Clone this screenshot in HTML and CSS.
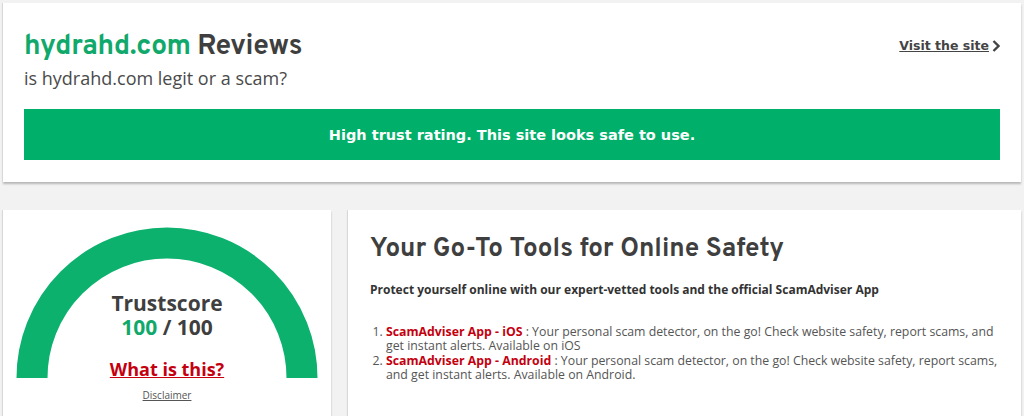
FILE: index.html
```html
<!DOCTYPE html>
<html lang="en">
<head>
<meta charset="utf-8">
<title>hydrahd.com Reviews</title>
<link rel="stylesheet" href="styles.css">
</head>
<body>
<div class="page">
  <section class="card hero">
    <div class="hero-top">
      <div class="hero-titles">
        <h1 class="hero-title"><span class="domain">hydrahd.com</span> Reviews</h1>
        <p class="hero-sub">is hydrahd.com legit or a scam?</p>
      </div>
      <a class="visit" href="#">Visit the site <svg class="chev" viewBox="0 0 8 12" width="8" height="12"><path d="M1.5 1 L6.5 6 L1.5 11" fill="none" stroke="currentColor" stroke-width="2.4"/></svg></a>
    </div>
    <div class="verdict">High trust rating. This site looks safe to use.</div>
  </section>

  <div class="row">
    <section class="card score">
      <div class="gauge">
        <svg class="gauge-arc" viewBox="0 0 302 153" width="302" height="153">
          <path d="M16 151 A135 135 0 0 1 286 151" fill="none" stroke="#0db16e" stroke-width="31"/>
        </svg>
        <div class="gauge-text">
          <div class="ts-label">Trustscore</div>
          <div class="ts-value"><span class="ts-num">100</span> / 100</div>
          <a class="whatis" href="#">What is this?</a>
        </div>
      </div>
      <a class="disclaimer" href="#">Disclaimer</a>
    </section>

    <section class="card tools">
      <h2 class="tools-title">Your Go-To Tools for Online Safety</h2>
      <p class="tools-lead">Protect yourself online with our expert-vetted tools and the official ScamAdviser App</p>
      <ol class="tools-list">
        <li><a href="#">ScamAdviser App - iOS</a> : Your personal scam detector, on the go! Check website safety, report scams, and get instant alerts. Available on iOS</li>
        <li><a href="#">ScamAdviser App - Android</a> : Your personal scam detector, on the go! Check website safety, report scams, and get instant alerts. Available on Android.</li>
      </ol>
    </section>
  </div>
</div>
</body>
</html>
```

FILE: styles.css
```css
* { box-sizing: border-box; }
html, body { margin: 0; padding: 0; }
body {
  background: #f2f2f2;
  font-family: "Open Sans", "Liberation Sans", sans-serif;
  color: #444;
  overflow: hidden;
}
.page {
  padding: 3px 3px 0 3px;
  display: flex;
  flex-direction: column;
  gap: 28px;
}
.card {
  background: #fff;
  box-shadow: -1px 0 0 #d8d8d8, 0 2px 2px rgba(0,0,0,0.25);
}
.hero {
  padding: 27px 21px 22px 21px;
}
.hero-top {
  display: flex;
  justify-content: space-between;
  align-items: flex-start;
}
.hero-title {
  margin: 0;
  font-family: "Overpass", "DejaVu Sans", sans-serif;
  font-weight: 700;
  font-size: 28px;
  line-height: 34px;
  color: #3f3f3f;
  letter-spacing: -0.3px;
}
.domain { color: #11a96b; }
.hero-sub {
  margin: 1px 0 0 0;
  font-size: 18px;
  line-height: 26px;
  color: #4a4a4a;
}
.visit {
  margin-top: 8px;
  font-family: "DejaVu Sans", sans-serif;
  font-weight: 700;
  font-size: 12.5px;
  color: #444;
  text-decoration: underline;
  display: flex;
  align-items: center;
  gap: 3px;
}
.chev { display: block; }
.verdict {
  margin-top: 18px;
  height: 51px;
  background: #00b06a;
  color: #fff;
  font-family: "DejaVu Sans", sans-serif;
  font-weight: 700;
  font-size: 14.5px;
  display: flex;
  align-items: center;
  justify-content: center;
  padding-top: 1px;
}
.row {
  display: flex;
  gap: 17px;
  align-items: flex-start;
}
.score {
  width: 328px;
  height: 210px;
  padding-top: 17px;
  display: flex;
  flex-direction: column;
  align-items: center;
}
.gauge {
  position: relative;
  width: 302px;
  height: 153px;
}
.gauge-arc { display: block; }
.gauge-text {
  position: absolute;
  left: 0; right: 0; bottom: 0;
  display: flex;
  flex-direction: column;
  align-items: center;
}
.ts-label {
  font-weight: 700;
  font-size: 21px;
  line-height: 24px;
  color: #3f3f3f;
}
.ts-value {
  font-weight: 700;
  font-size: 21px;
  line-height: 24px;
  color: #3f3f3f;
}
.ts-num { color: #11a96b; }
.whatis {
  margin-top: 19px;
  font-weight: 700;
  font-size: 18px;
  line-height: 22px;
  color: #c4000f;
  text-decoration: underline;
}
.disclaimer {
  margin-top: 8px;
  font-size: 10px;
  line-height: 14px;
  color: #555;
  text-decoration: underline;
}
.tools {
  flex: 1;
  height: 210px;
  padding: 24px 18px 0 22px;
}
.tools-title {
  margin: 0;
  font-family: "Overpass", "DejaVu Sans", sans-serif;
  font-weight: 700;
  font-size: 26px;
  line-height: 32px;
  color: #3f3f3f;
}
.tools-lead {
  margin: 16px 0 0 0;
  font-weight: 700;
  font-size: 12px;
  line-height: 16px;
  color: #333;
}
.tools-list {
  margin: 27px 0 0 0;
  padding-left: 16px;
  font-size: 12.3px;
  line-height: 14.3px;
  color: #555;
}
.tools-list a {
  color: #c4000f;
  font-weight: 700;
  text-decoration: none;
}
```
